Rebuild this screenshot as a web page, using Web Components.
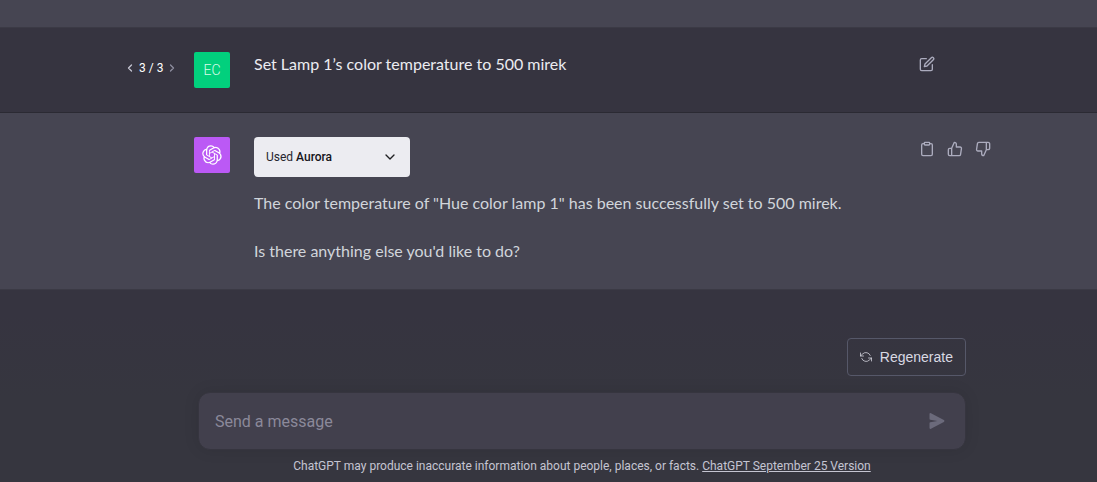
<!DOCTYPE html>
<html lang="en">
<head>
<meta charset="utf-8">
<meta name="viewport" content="width=device-width, initial-scale=1">
<title>ChatGPT</title>
<style>
  html { --dark: #363440; --light: #464552; --icon: #acacbe; --message-font: Lato, "Liberation Sans", sans-serif; --ui-font: Roboto, "Liberation Sans", sans-serif; }
  body { margin: 0; background: var(--dark); color: #ececf1; font: 16px/28px var(--ui-font); }
</style>
</head>
<body>
<chat-page>
  <chat-turn kind="assistant" class="previous"></chat-turn>
  <chat-turn kind="user">
    <turn-pager slot="pager" current="3" total="3"></turn-pager>
    <user-avatar slot="avatar">EC</user-avatar>
    <span>Set Lamp 1’s color temperature to 500 mirek</span>
    <icon-button slot="actions" icon="edit" label="Edit message"></icon-button>
  </chat-turn>
  <chat-turn kind="assistant">
    <bot-avatar slot="avatar"></bot-avatar>
    <plugin-used name="Aurora"></plugin-used>
    <chat-text>The color temperature of "Hue color lamp 1" has been successfully set to 500 mirek.</chat-text>
    <chat-text>Is there anything else you'd like to do?</chat-text>
    <icon-button slot="actions" icon="clipboard" label="Copy"></icon-button>
    <icon-button slot="actions" icon="up" label="Good response"></icon-button>
    <icon-button slot="actions" icon="down" label="Bad response"></icon-button>
  </chat-turn>
  <chat-composer slot="composer"></chat-composer>
</chat-page>

<script>
const define = (name, html, setup) => {
  const template = document.createElement('template');
  template.innerHTML = html;
  customElements.define(name, class extends HTMLElement {
    constructor() {
      super();
      this.attachShadow({ mode: 'open' }).append(template.content.cloneNode(true));
    }
    connectedCallback() { if (setup) setup(this, this.shadowRoot); }
  });
};

const icons = {
  edit: '<path d="M11 4H4a2 2 0 0 0-2 2v14a2 2 0 0 0 2 2h14a2 2 0 0 0 2-2v-7"/><path d="M18.5 2.5a2.121 2.121 0 0 1 3 3L12 15l-4 1 1-4 9.5-9.5z"/>',
  clipboard: '<path d="M16 4h2a2 2 0 0 1 2 2v14a2 2 0 0 1-2 2H6a2 2 0 0 1-2-2V6a2 2 0 0 1 2-2h2"/><rect x="8" y="2" width="8" height="4" rx="1"/>',
  up: '<path d="M14 9V5a3 3 0 0 0-3-3l-4 9v11h11.28a2 2 0 0 0 2-1.7l1.38-9a2 2 0 0 0-2-2.3zM7 22H4a2 2 0 0 1-2-2v-7a2 2 0 0 1 2-2h3"/>',
  down: '<path d="M10 15v4a3 3 0 0 0 3 3l4-9V2H5.72a2 2 0 0 0-2 1.7l-1.38 9a2 2 0 0 0 2 2.3zm7-13h2.67A2.31 2.31 0 0 1 22 4v7a2.31 2.31 0 0 1-2.33 2H17"/>'
};

define('chat-page', `
  <style>
    :host { display: flex; flex-direction: column; min-height: 100vh; }
    main { flex: 1; }
    footer { padding: 24px 0 8px; background: linear-gradient(var(--dark), #36363f 50%, #36363f); }
  </style>
  <main><slot></slot></main>
  <footer><slot name="composer"></slot></footer>`);

define('chat-turn', `
  <style>
    :host { display: block; padding-left: 25px; border-bottom: 1px solid #2b2a33; background: var(--dark); }
    :host([kind="assistant"]) { background: var(--light); border-color: #3b3a45; }
    :host(.previous) { height: 27px; }
    :host(.previous) .row { display: none; }
    .row { display: grid; grid-template-columns: 43px 36px minmax(0, 1fr) 80px; column-gap: 24px;
      max-width: 868px; margin: 0 auto; padding: 24px 0; }
    .body { display: flex; flex-direction: column; align-items: flex-start; font-family: var(--message-font); }
    :host([kind="user"]) .body { line-height: 24px; }
    .actions { display: flex; gap: 4px; align-items: flex-start; }
  </style>
  <div class="row">
    <div><slot name="pager"></slot></div>
    <div><slot name="avatar"></slot></div>
    <div class="body"><slot></slot></div>
    <div class="actions"><slot name="actions"></slot></div>
  </div>`);

define('chat-text', `
  <style>
    :host { display: block; color: #d1d5db; margin-bottom: 20px; }
    :host(:last-of-type) { margin-bottom: 0; }
    p { margin: 0; }
  </style>
  <p><slot></slot></p>`);

define('turn-pager', `
  <style>
    :host { display: flex; align-items: center; gap: 6px; height: 32px; font-size: 12px; line-height: 16px; color: #fff; }
    button { all: unset; display: flex; color: #c5c5d2; }
    button:disabled { color: #8e8ea0; }
    svg { width: 6px; height: 12px; fill: none; stroke: currentColor; stroke-width: 1.3; stroke-linecap: round; stroke-linejoin: round; }
    span { white-space: nowrap; }
  </style>
  <button aria-label="Previous"><svg viewBox="0 0 6 12"><path d="M4.5 3 1.5 6l3 3"/></svg></button>
  <span></span>
  <button aria-label="Next" disabled><svg viewBox="0 0 6 12"><path d="m1.5 3 3 3-3 3"/></svg></button>`,
  (el, root) => { root.querySelector('span').textContent = el.getAttribute('current') + ' / ' + el.getAttribute('total'); });

define('user-avatar', `
  <style>
    :host { display: flex; align-items: center; justify-content: center; width: 36px; height: 36px;
      border-radius: 2px; background: #02d07d; color: #d9fbe9; font-size: 14px; line-height: 20px; font-weight: 300; }
  </style><slot></slot>`);

define('bot-avatar', `
  <style>
    :host { display: flex; align-items: center; justify-content: center; width: 36px; height: 36px;
      border-radius: 2px; background: #bb59f5; color: #fff; }
    svg { width: 20px; height: 20px; fill: currentColor; }
  </style>
  <svg viewBox="0 0 41 41" role="img" aria-label="ChatGPT"><path d="M37.532 16.87a9.963 9.963 0 0 0-.856-8.184 10.078 10.078 0 0 0-10.855-4.835A9.964 9.964 0 0 0 18.306.5a10.079 10.079 0 0 0-9.614 6.977 9.967 9.967 0 0 0-6.664 4.834 10.08 10.08 0 0 0 1.24 11.817 9.965 9.965 0 0 0 .856 8.185 10.079 10.079 0 0 0 10.855 4.835 9.965 9.965 0 0 0 7.516 3.35 10.078 10.078 0 0 0 9.617-6.981 9.967 9.967 0 0 0 6.663-4.834 10.079 10.079 0 0 0-1.243-11.813ZM22.498 37.886a7.474 7.474 0 0 1-4.799-1.735c.061-.033.168-.091.237-.134l7.964-4.6a1.294 1.294 0 0 0 .655-1.134V19.054l3.366 1.944a.12.12 0 0 1 .066.092v9.299a7.505 7.505 0 0 1-7.49 7.496ZM6.392 31.006a7.471 7.471 0 0 1-.894-5.023c.06.036.162.099.237.141l7.964 4.6a1.297 1.297 0 0 0 1.308 0l9.724-5.614v3.888a.12.12 0 0 1-.048.103l-8.051 4.649a7.504 7.504 0 0 1-10.24-2.744ZM4.297 13.62A7.469 7.469 0 0 1 8.2 10.333c0 .068-.004.19-.004.274v9.201a1.294 1.294 0 0 0 .654 1.132l9.723 5.614-3.366 1.944a.12.12 0 0 1-.114.01L7.04 23.856a7.504 7.504 0 0 1-2.743-10.237Zm27.658 6.437-9.724-5.615 3.367-1.943a.121.121 0 0 1 .113-.01l8.052 4.648a7.498 7.498 0 0 1-1.158 13.528v-9.476a1.293 1.293 0 0 0-.65-1.132Zm3.35-5.043c-.059-.037-.162-.099-.236-.141l-7.965-4.6a1.298 1.298 0 0 0-1.308 0l-9.723 5.614v-3.888a.12.12 0 0 1 .048-.103l8.05-4.645a7.497 7.497 0 0 1 11.135 7.763Zm-21.063 6.929-3.367-1.944a.12.12 0 0 1-.065-.092v-9.299a7.497 7.497 0 0 1 12.293-5.756 6.94 6.94 0 0 0-.236.134l-7.965 4.6a1.294 1.294 0 0 0-.654 1.132l-.006 11.225Zm1.829-3.943 4.33-2.501 4.332 2.5v5l-4.331 2.5-4.331-2.5V18Z"/></svg>`);

define('icon-button', `
  <style>
    :host { display: block; }
    button { all: unset; display: flex; padding: 4px; color: var(--icon); cursor: pointer; }
    svg { width: 16px; height: 16px; fill: none; stroke: currentColor; stroke-width: 2; stroke-linecap: round; stroke-linejoin: round; }
  </style>
  <button><svg viewBox="0 0 24 24"></svg></button>`,
  (el, root) => {
    root.querySelector('button').setAttribute('aria-label', el.getAttribute('label'));
    root.querySelector('svg').innerHTML = icons[el.getAttribute('icon')];
  });

define('plugin-used', `
  <style>
    :host { display: block; margin-bottom: 12px; }
    button { all: unset; box-sizing: border-box; display: flex; align-items: center; justify-content: space-between;
      width: 156px; height: 40px; padding: 0 12px; border-radius: 4px; background: #ececf1; color: #26252e;
      font: 12px/16px var(--ui-font); cursor: pointer; }
    b { font-weight: 500; color: #15141a; }
    svg { width: 16px; height: 16px; fill: none; stroke: #202123; stroke-width: 2; stroke-linecap: round; stroke-linejoin: round; }
  </style>
  <button aria-expanded="false"><span>Used <b></b></span><svg viewBox="0 0 24 24"><path d="m6 9 6 6 6-6"/></svg></button>`,
  (el, root) => { root.querySelector('b').textContent = el.getAttribute('name'); });

define('chat-composer', `
  <style>
    :host { display: block; padding-left: 67px; }
    form { display: flex; flex-direction: column; align-items: flex-end; gap: 16px; max-width: 768px; margin: 0 auto; }
    .again { display: flex; align-items: center; gap: 8px; padding: 8px 12px; border: 1px solid #565869; border-radius: 4px;
      background: none; color: #d9d9e3; font: 14px/20px "Liberation Sans", sans-serif; }
    .again svg { width: 12px; height: 12px; fill: none; stroke: currentColor; stroke-width: 1.5; stroke-linecap: round; stroke-linejoin: round; }
    .box { display: flex; align-items: center; align-self: stretch; height: 56px; padding: 0 12px 0 16px;
      border: 1px solid #36353f; border-radius: 12px; background: #42404d; box-shadow: 0 0 15px rgba(0, 0, 0, .1); }
    input { flex: 1; min-width: 0; padding: 2px 0 0; border: 0; outline: 0; background: none; color: #fff; font: inherit; }
    input::placeholder { color: #8b899a; opacity: 1; }
    .send { display: flex; padding: 8px; border: 0; background: none; color: #6b6a7b; }
    .send svg { width: 16px; height: 16px; fill: currentColor; }
    p { margin: 8px 0 0; text-align: center; font-size: 12px; line-height: 16px; color: #c5c5d2; }
    a { color: inherit; }
  </style>
  <form>
    <button type="button" class="again"><svg viewBox="0 0 24 24"><path d="M1 4v6h6M23 20v-6h-6"/><path d="M20.49 9A9 9 0 0 0 5.64 5.64L1 10m22 4-4.64 4.36A9 9 0 0 1 3.51 15"/></svg>Regenerate</button>
    <div class="box">
      <input type="text" placeholder="Send a message" aria-label="Send a message">
      <button type="button" class="send" aria-label="Send"><svg viewBox="0 0 16 16"><path d="M.5 1.163A1 1 0 0 1 1.97.28l12.868 6.837a1 1 0 0 1 0 1.766L1.969 15.72A1 1 0 0 1 .5 14.836V10.33a1 1 0 0 1 .816-.983L8.5 8 1.316 6.653A1 1 0 0 1 .5 5.67V1.163Z"/></svg></button>
    </div>
  </form>
  <p>ChatGPT may produce inaccurate information about people, places, or facts. <a href="#release-notes">ChatGPT September 25 Version</a></p>`);
</script>
</body>
</html>
